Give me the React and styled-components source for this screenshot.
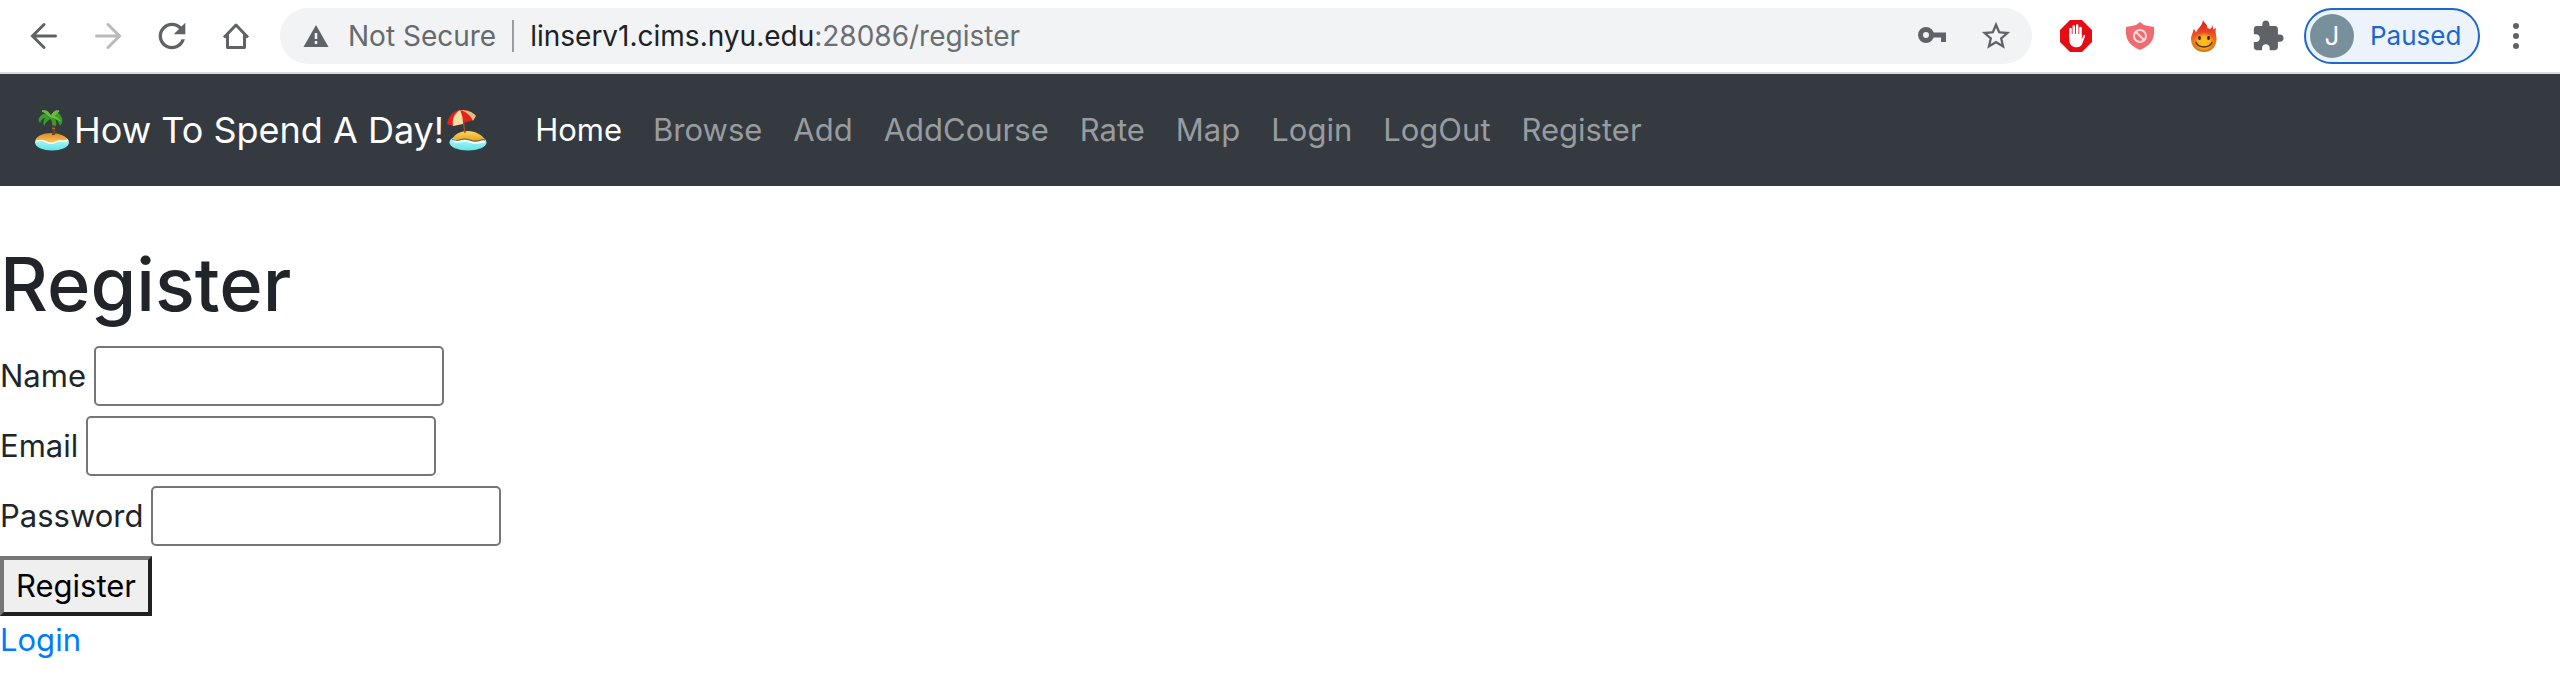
import React from "react";
import styled, { createGlobalStyle } from "styled-components";

const GlobalStyle = createGlobalStyle`
  *, *::before, *::after { box-sizing: border-box; }
  body {
    margin: 0;
    background: #fff;
    color: #212529;
    font-family: Inter, "Liberation Sans", sans-serif;
    font-size: 31px;
    line-height: 48px;
  }
  button, input { font: inherit; }
`;

const Toolbar = styled.header`
  display: flex;
  align-items: center;
  padding: 8px 12px;
  background: #fff;
  border-bottom: 2px solid #d8dade;
  color: #5f6368;
`;

const IconButton = styled.button`
  display: flex;
  flex: none;
  align-items: center;
  justify-content: center;
  width: 64px;
  height: 56px;
  padding: 0;
  border: 0;
  background: none;
  color: ${({ $muted }) => ($muted ? "#bababd" : "#5f6368")};
`;

const AddressBar = styled.div`
  display: flex;
  flex: 1;
  align-items: center;
  min-width: 0;
  height: 56px;
  margin: 0 12px;
  padding: 0 4px 0 20px;
  border-radius: 28px;
  background: #f1f3f4;
  font-size: 28px;
  line-height: 32px;
`;

const Security = styled.span`
  display: flex;
  align-items: center;
  gap: 16px;
  padding-right: 16px;
  border-right: 2px solid #9a9da1;
  color: #666a6e;
  white-space: nowrap;
`;

const Url = styled.span`
  flex: 1;
  padding-left: 16px;
  color: #6b6e72;
  white-space: nowrap;
`;

const Host = styled.span`
  color: #202124;
`;

const ProfileButton = styled.button`
  display: flex;
  flex: none;
  align-items: center;
  gap: 16px;
  width: 176px;
  height: 56px;
  margin: 0 4px;
  padding: 0 4px;
  border: 2px solid #1b66cf;
  border-radius: 28px;
  background: #ecf3fb;
  color: #1b66cf;
  font-size: 26px;
  line-height: 32px;
`;

const Avatar = styled.span`
  width: 44px;
  height: 44px;
  border-radius: 50%;
  background: #78909c;
  color: #fff;
  font-size: 26px;
  line-height: 44px;
  text-align: center;
`;

const Navbar = styled.nav`
  display: flex;
  align-items: center;
  padding: 16px 32px;
  background: #343a40;
`;

const Brand = styled.a`
  display: flex;
  align-items: center;
  gap: 2px;
  margin-right: 32px;
  padding: 10px 0;
  color: #fff;
  font-size: 36px;
  line-height: 60px;
  text-decoration: none;
  white-space: nowrap;
`;

const NavList = styled.ul`
  display: flex;
  gap: 1px;
  margin: 0;
  padding: 0;
  list-style: none;
`;

const NavLink = styled.a`
  display: block;
  padding: 16px 15px;
  color: ${({ $active }) => ($active ? "#fff" : "#999c9f")};
  text-decoration: none;
`;

const Page = styled.main`
  padding-top: 50px;
`;

const Title = styled.h1`
  margin: 0 0 14px;
  font-size: 74px;
  font-weight: 500;
  line-height: 96px;
`;

const Form = styled.form`
  display: flex;
  flex-direction: column;
  align-items: flex-start;
  gap: 10px;
`;

const Field = styled.div`
  display: flex;
  align-items: center;
  gap: 8px;
`;

const TextInput = styled.input`
  width: 350px;
  height: 60px;
  padding: 2px 4px;
  border: 2px solid #767676;
  border-radius: 5px;
  background: #fff;
`;

const SubmitButton = styled.button`
  height: 60px;
  padding: 0 12px;
  border: 4px solid;
  border-color: #767676 #212121 #212121 #767676;
  background: #efefef;
  color: #000;
`;

const TextLink = styled.a`
  color: #007bff;
  text-decoration: none;
`;

const Stroke = (props) => (
  <svg width="32" height="32" viewBox="0 0 32 32" fill="none" stroke="currentColor" strokeWidth="3" aria-hidden="true" {...props} />
);

const Solid = ({ size, d }) => (
  <svg width={size} height={size} viewBox="0 0 24 24" fill="currentColor" aria-hidden="true">
    <path d={d} />
  </svg>
);

const PalmIsland = () => (
  <svg width="40" height="44" viewBox="0 0 40 44" aria-hidden="true">
    <defs>
      <linearGradient id="palmSea" x1="0" y1="0" x2="0" y2="1">
        <stop offset="0" stopColor="#d7fbfa" />
        <stop offset="1" stopColor="#5de5e9" />
      </linearGradient>
      <linearGradient id="palmSand" x1="0" y1="0" x2="0" y2="1">
        <stop offset="0" stopColor="#d98a1c" />
        <stop offset="1" stopColor="#ffc765" />
      </linearGradient>
    </defs>
    <ellipse cx="20" cy="34.500" rx="17" ry="8" fill="url(#palmSea)" />
    <path d="M3.500 32C5 28 11 25 19 25s15 3 17 7c-3 0-4 1-7 1-4 0-6 2-10 2s-6-2-9-1.500c-3 .5-5-.5-6.500-1.500z" fill="url(#palmSand)" />
    <path d="M4 33c4 0 5-1 8 0s5 3 9 2 6-3 9-2 4 0 6-1" stroke="#fffbe8" strokeWidth="1.500" fill="none" />
    <path d="M18.500 9c2 5 2.500 11 1.500 18h3c1-7 0-13-2-18z" fill="#6a4322" />
    <path d="M20 12l2 1M20 16l2.500 1M20 20l3 1" stroke="#a87945" strokeWidth="1" />
    <path d="M19 9C15 4 10 5 7 10c-1 2 0 4 1 5 1-3 3-5 5-5-2 3-2 6-1 8 2-4 4-6 7-7 1 4 2 6 5 7 1-3 0-5-1-7 3 1 4 4 5 7 3-3 3-7 1-10-2-4-6-5-10 1z" fill="#3a9b29" />
    <path d="M19 9c-2-6-6-7-9-6 2 1 5 3 9 6 1-4 4-7 8-6-1 2-4 4-8 6 4-1 7 0 9 4" fill="#67bd35" stroke="#72c641" strokeWidth="1" />
  </svg>
);

const BeachUmbrella = () => (
  <svg width="42" height="44" viewBox="0 0 42 44" aria-hidden="true">
    <defs>
      <linearGradient id="beachSea" x1="0" y1="0" x2="0" y2="1">
        <stop offset="0" stopColor="#d7fbfa" />
        <stop offset="1" stopColor="#5de5e9" />
      </linearGradient>
      <linearGradient id="beachSand" x1="0" y1="0" x2="0" y2="1">
        <stop offset="0" stopColor="#ffd653" />
        <stop offset="1" stopColor="#e6a126" />
      </linearGradient>
    </defs>
    <ellipse cx="22" cy="34.500" rx="18.500" ry="8" fill="url(#beachSea)" />
    <path d="M7 30c2-4 8-7 15-7s15 4 17 9c-3-1-5 0-8 1-4 1-7-2-11-2-5 0-8 2-13-1z" fill="url(#beachSand)" />
    <path d="M6 31c5 3 8 0 13 0s7 3 12 2 5-2 8-1" stroke="#5b5434" strokeWidth="1" fill="none" />
    <path d="M7 33c5 2 8 0 12 0s7 3 12 2 5-1 8-1" stroke="#fff" strokeWidth="1.500" fill="none" />
    <path d="M16 5l3 20" stroke="#a34f24" strokeWidth="1.500" />
    <path d="M1 16C2 9 7 3 14 2c7-1 13 2 16 6l-5 5-8 2-9 3z" fill="#e5221c" />
    <path d="M14 2C8 6 6 11 7 18l10-2c0-5-1-10-3-14z" fill="#f6dfa2" />
    <path d="M14 2c7 0 13 2 16 6l-3 5C25 8 21 4 14 2z" fill="#dcc084" />
  </svg>
);

const ADBLOCK_OCTAGON = "10,0 22,0 32,10 32,22 22,32 10,32 0,22 0,10";

const AdblockIcon = () => (
  <svg width="32" height="32" viewBox="0 0 32 32" aria-hidden="true">
    <polygon points={ADBLOCK_OCTAGON} fill="#e40d16" />
    <path d="M10.500 16V9M13.800 14V6.500M17.200 14V5.500M20.500 16V8" stroke="#fff" strokeWidth="2.500" strokeLinecap="round" />
    <path d="M9.300 14h12.500v5.500l1.500-4c.6-1 2.200-.6 1.800.7L22.500 23c-1 3-3 4.300-6 4.300-4.500 0-7.200-3-7.200-7.300z" fill="#fff" />
  </svg>
);

const ShieldIcon = () => (
  <svg width="32" height="32" viewBox="0 0 32 32" aria-hidden="true">
    <path d="M16 2l4 3c3 1 6 1 10 2 1 11-2 18-14 23C4 25 1 18 2 7c4-1 7-1 10-2z" fill="#ee6b70" />
    <circle cx="16" cy="16" r="6" fill="none" stroke="#f9dcdc" strokeWidth="2" />
    <path d="M12 12l8 8" stroke="#f9dcdc" strokeWidth="2" />
  </svg>
);

const FlameIcon = () => (
  <svg width="32" height="32" viewBox="0 0 32 32" aria-hidden="true">
    <defs>
      <linearGradient id="flame" x1="0" y1="0" x2="0" y2="1">
        <stop offset="0" stopColor="#dc1c1c" />
        <stop offset="0.400" stopColor="#e94a24" />
        <stop offset="0.700" stopColor="#f07a1c" />
        <stop offset="1" stopColor="#c97a18" />
      </linearGradient>
      <radialGradient id="flameFace" cx="0.500" cy="0.550" r="0.500">
        <stop offset="0" stopColor="#ffc51c" />
        <stop offset="0.600" stopColor="#fcae1c" />
        <stop offset="1" stopColor="#f58b1c" stopOpacity="0" />
      </radialGradient>
    </defs>
    <path d="M15 0c1 3 4.500 4 4.500 8l2.500 1c1.500-1 2-2 2-4 1 1.500 1 3 1 4.500l3-1.500c-1 3 0 6 .5 10 .5 8-4.500 14-12.500 14S3 26 3 19c0-4 2-5 2.500-10 1.500 1 2 2 2.500 3.500C9.500 8 14.500 6 15 0z" fill="url(#flame)" />
    <ellipse cx="16" cy="21" rx="10.500" ry="10" fill="url(#flameFace)" />
    <ellipse cx="11.500" cy="18" rx="1.400" ry="2" fill="#30200f" />
    <ellipse cx="20.500" cy="18" rx="1.400" ry="2" fill="#30200f" />
    <path d="M8 22.500c3 6 13 6 16 0" fill="none" stroke="#55300f" strokeWidth="1.500" strokeLinecap="round" />
  </svg>
);

const REFRESH = "M17.650 6.350C16.200 4.900 14.210 4 12 4c-4.420 0-7.990 3.580-7.990 8s3.570 8 7.990 8c3.730 0 6.840-2.550 7.730-6h-2.080c-.82 2.330-3.040 4-5.650 4-3.310 0-6-2.690-6-6s2.690-6 6-6c1.660 0 3.140.69 4.220 1.780L13 11h7V4l-2.350 2.350z";
const STAR = "M22 9.240l-7.190-.62L12 2 9.190 8.630 2 9.240l5.460 4.730L5.820 21 12 17.270 18.180 21l-1.630-7.030L22 9.240zM12 15.400l-3.760 2.270 1-4.280-3.320-2.880 4.380-.38L12 6.100l1.710 4.040 4.380.38-3.320 2.880 1 4.280L12 15.400z";
const PUZZLE = "M20.500 11H19V7c0-1.100-.9-2-2-2h-4V3.500C13 2.120 11.880 1 10.500 1S8 2.120 8 3.500V5H4c-1.100 0-1.990.9-1.990 2v3.800H3.500c1.490 0 2.700 1.210 2.700 2.700s-1.210 2.700-2.700 2.700H2V20c0 1.100.9 2 2 2h3.800v-1.500c0-1.490 1.210-2.700 2.700-2.700 1.490 0 2.700 1.210 2.700 2.700V22H17c1.100 0 2-.9 2-2v-4h1.500c1.380 0 2.500-1.120 2.500-2.500S21.880 11 20.500 11z";

const NAV_ITEMS = ["Home", "Browse", "Add", "AddCourse", "Rate", "Map", "Login", "LogOut", "Register"];

const FIELDS = [
  { id: "name", label: "Name", type: "text" },
  { id: "email", label: "Email", type: "text" },
  { id: "password", label: "Password", type: "password" },
];

const BrowserToolbar = () => (
  <Toolbar>
    <IconButton aria-label="Back">
      <Stroke strokeLinecap="round">
        <path d="M27.500 16H5M16 4.500L4.500 16 16 27.500" />
      </Stroke>
    </IconButton>
    <IconButton aria-label="Forward" $muted>
      <Stroke strokeLinecap="round">
        <path d="M4.500 16H27M16 4.500L27.500 16 16 27.500" />
      </Stroke>
    </IconButton>
    <IconButton aria-label="Reload">
      <Solid size={40} d={REFRESH} />
    </IconButton>
    <IconButton aria-label="Home page">
      <Stroke>
        <path d="M4 17.500L16 5l12 12.500M7.500 14.500v13h17v-13" strokeLinejoin="round" />
      </Stroke>
    </IconButton>
    <AddressBar>
      <Security>
        <svg width="32" height="32" viewBox="0 0 32 32" aria-hidden="true">
          <path d="M16 5l12.500 22h-25z" fill="#5f6368" />
          <path d="M16 13v6M16 21v3" stroke="#f1f3f4" strokeWidth="2.500" />
        </svg>
        Not Secure
      </Security>
      <Url>
        <Host>linserv1.cims.nyu.edu</Host>:28086/register
      </Url>
      <IconButton aria-label="Saved passwords">
        <svg width="32" height="32" viewBox="0 0 32 32" aria-hidden="true">
          <circle cx="10" cy="15" r="5.500" fill="none" stroke="currentColor" strokeWidth="5" />
          <path d="M16 12.500h14V22h-5v-4.500h-9z" fill="currentColor" />
        </svg>
      </IconButton>
      <IconButton aria-label="Bookmark this page">
        <Solid size={34} d={STAR} />
      </IconButton>
    </AddressBar>
    <IconButton aria-label="Ad blocker">
      <AdblockIcon />
    </IconButton>
    <IconButton aria-label="Tracker shield">
      <ShieldIcon />
    </IconButton>
    <IconButton aria-label="Flame extension">
      <FlameIcon />
    </IconButton>
    <IconButton aria-label="Extensions">
      <Solid size={34} d={PUZZLE} />
    </IconButton>
    <ProfileButton>
      <Avatar>J</Avatar>
      Paused
    </ProfileButton>
    <IconButton aria-label="Menu">
      <svg width="32" height="32" viewBox="0 0 32 32" fill="currentColor" aria-hidden="true">
        <circle cx="16" cy="6" r="3" />
        <circle cx="16" cy="16" r="3" />
        <circle cx="16" cy="26" r="3" />
      </svg>
    </IconButton>
  </Toolbar>
);

export default function App() {
  return (
    <>
      <GlobalStyle />
      <BrowserToolbar />
      <Navbar>
        <Brand href="#">
          <PalmIsland />
          How To Spend A Day!
          <BeachUmbrella />
        </Brand>
        <NavList>
          {NAV_ITEMS.map((item) => (
            <li key={item}>
              <NavLink href="#" $active={item === "Home"}>
                {item}
              </NavLink>
            </li>
          ))}
        </NavList>
      </Navbar>
      <Page>
        <Title>Register</Title>
        <Form>
          {FIELDS.map(({ id, label, type }) => (
            <Field key={id}>
              <label htmlFor={id}>{label}</label>
              <TextInput id={id} type={type} />
            </Field>
          ))}
          <SubmitButton type="button">Register</SubmitButton>
        </Form>
        <TextLink href="#">Login</TextLink>
      </Page>
    </>
  );
}
